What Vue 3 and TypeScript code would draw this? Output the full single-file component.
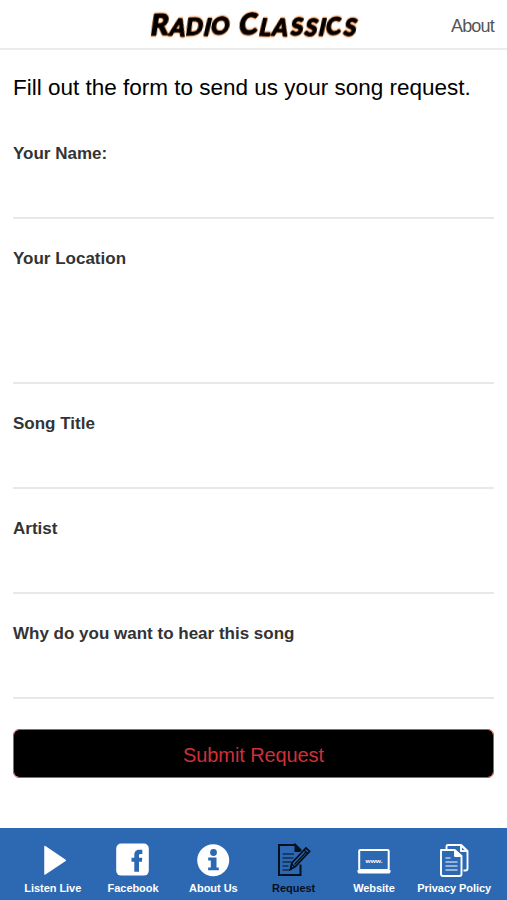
<script setup lang="ts">
import { reactive } from 'vue'

interface Field {
  id: string
  label: string
  multiline?: boolean
}

interface Tab {
  id: string
  label: string
}

const fields: Field[] = [
  { id: 'name', label: 'Your Name:' },
  { id: 'location', label: 'Your Location', multiline: true },
  { id: 'title', label: 'Song Title' },
  { id: 'artist', label: 'Artist' },
  { id: 'reason', label: 'Why do you want to hear this song' },
]

const tabs: Tab[] = [
  { id: 'listen', label: 'Listen Live' },
  { id: 'facebook', label: 'Facebook' },
  { id: 'about', label: 'About Us' },
  { id: 'request', label: 'Request' },
  { id: 'website', label: 'Website' },
  { id: 'privacy', label: 'Privacy Policy' },
]

const activeTab = 'request'
const values = reactive<Record<string, string>>({ name: '', location: '', title: '', artist: '', reason: '' })

// Hand-lettered wordmark: every glyph has its own offset and tilt.
const logoX = [3.5, 22.5, 39, 56.5, 65, 86, 92.5, 112, 125, 144, 157.5, 171.5, 179.5, 196.5]
  .map((x) => (x / 0.95).toFixed(1))
  .join(' ')
const logoTilt = '-2 4 -3 4 -8 0 -6 3 3 -3 4 3 -6 4'
</script>

<template>
  <div class="screen">
    <header class="topbar">
      <svg class="logo" viewBox="0 0 220 40" role="img" aria-label="Radio Classics">
        <text class="logo-text" transform="translate(7 0) skewX(-10) scale(0.95 1)" :x="logoX" y="28.2" :rotate="logoTilt"><tspan class="cap">R</tspan>adio <tspan class="cap">C</tspan>lassics</text>
      </svg>
      <a class="about">About</a>
    </header>

    <form class="form" @submit.prevent>
      <h1 class="intro">Fill out the form to send us your song request.</h1>
      <div v-for="f in fields" :key="f.id" class="field" :class="{ tall: f.multiline }">
        <label :for="f.id">{{ f.label }}</label>
        <textarea v-if="f.multiline" :id="f.id" v-model="values[f.id]"></textarea>
        <input v-else :id="f.id" v-model="values[f.id]" type="text" />
      </div>
      <button class="submit" type="submit">Submit Request</button>
    </form>

    <nav class="tabs">
      <a v-for="t in tabs" :key="t.id" class="tab" :class="{ active: t.id === activeTab }">
        <svg class="icon" viewBox="0 0 40 36">
          <path v-if="t.id === 'listen'" d="M12 4.500 32.300 18.300 12 32Z" fill="currentColor" stroke="currentColor" stroke-width="1.500" stroke-linejoin="round" />
          <template v-else-if="t.id === 'facebook'">
            <rect x="3.200" y="1.600" width="32.600" height="32" rx="5" fill="currentColor" />
            <path d="M21.300 29.700V19.700h-2.800v-4h2.800v-2.700c0-3.600 2-5.300 5.200-5.300h2.800v4.300h-1.700c-1.200 0-1.600.5-1.600 1.600v2.100h3.300l-.4 4H26v10Z" fill="#2d69b3" />
          </template>
          <template v-else-if="t.id === 'about'">
            <circle cx="20.200" cy="18.200" r="16" fill="currentColor" />
            <circle cx="20.500" cy="10.500" r="3.400" fill="#2d69b3" />
            <path d="M15.200 15.600h8.300v9.800h2.300v2.800H15.100v-2.800h2.700v-7h-2.600Z" fill="#2d69b3" />
          </template>
          <g v-else-if="t.id === 'request'" fill="none" stroke="currentColor" stroke-width="2">
            <path d="M21 3H5v30h21.500V22.500M26.500 9V8l-5-5v6h5" />
            <path d="m21 3 6.500 6H21Z" fill="currentColor" stroke="none" />
            <path d="M8.500 12h11.500M8.500 16h11M8.500 20h9M8.500 24h6M8.500 28h8" stroke-width="1" />
            <path d="m16.500 27.200 1.400-6.200L32 6l3.600 3.400-14 15Z" stroke-width="1.800" />
            <path d="m20.500 22.500 12-13M30 8l4 3.700M17.800 22l3 2.800-4.300 2.400Z" stroke-width="1.300" />
          </g>
          <template v-else-if="t.id === 'website'">
            <rect x="5.200" y="8" width="29.500" height="20" rx="1" fill="none" stroke="currentColor" stroke-width="2" />
            <path d="M3.500 28h14l1 1h3l1-1h14v1.700c0 1-1 1.900-2 1.900h-29c-1 0-2-.9-2-1.900Z" fill="currentColor" />
            <text x="20" y="20.500" text-anchor="middle" font-size="6" font-weight="700" textLength="17" lengthAdjust="spacingAndGlyphs" fill="currentColor">www.</text>
          </template>
          <g v-else fill="none" stroke="currentColor" stroke-width="1.900" stroke-linejoin="round">
            <path d="M7 8h13.500l7 6v18a2 2 0 0 1-2 2H9a2 2 0 0 1-2-2Z" />
            <path d="M21 8.500V14h6Z" fill="currentColor" />
            <path d="M12.500 7V4.500Q12.500 3 14 3h13.200l6.300 6v17.500a2 2 0 0 1-2 2h-2M27 3.500V9h6.300Z" />
            <path d="M11.500 16h5M11.500 20h12M11.500 24h12M11.500 28h12" stroke-width="1" />
          </g>
        </svg>
        <span class="tab-label">{{ t.label }}</span>
      </a>
    </nav>
  </div>
</template>

<style>
body {
  background: #fff;
}
</style>

<style scoped>
.screen {
  display: flex;
  flex-direction: column;
  height: 900px;
  overflow: hidden;
  background: #fff;
  color: #000;
  font-family: "Liberation Sans", Arial, sans-serif;
}

.topbar {
  display: grid;
  grid-template-columns: 1fr 220px 1fr;
  align-items: center;
  box-sizing: border-box;
  height: 50px;
  padding: 0 13px;
  border-bottom: 2px solid #ebecec;
}

.logo {
  grid-column: 2;
  width: 220px;
  height: 40px;
  margin-top: 5px;
  overflow: visible;
}

.logo-text {
  font-family: Lato, sans-serif;
  font-size: 23.5px;
  font-weight: 900;
  text-transform: uppercase;
  fill: #000;
  stroke: #000;
  stroke-width: 1.2px;
  stroke-linejoin: round;
  filter: drop-shadow(0 0 0.8px #ff7a18) drop-shadow(0 0 0.6px #ff8a30);
}

.cap {
  font-size: 29px;
}

.about {
  justify-self: end;
  margin-top: 4px;
  font-size: 18px;
  letter-spacing: -0.8px;
  color: #555;
}

.form {
  flex: 1;
  padding: 0 13px;
}

.intro {
  margin: 25px 0 31px;
  font-size: 22.5px;
  line-height: 26px;
  font-weight: 400;
  white-space: nowrap;
}

.field {
  display: flex;
  flex-direction: column;
  box-sizing: border-box;
  height: 87px;
  margin-bottom: 18px;
  padding-top: 11px;
  border-bottom: 2px solid #e8e8e8;
}

.field.tall {
  height: 147px;
}

.field label {
  font-size: 17px;
  line-height: 21px;
  font-weight: 700;
  color: #333;
}

.field input,
.field textarea {
  flex: 1;
  min-height: 0;
  padding: 0;
  border: 0;
  outline: 0;
  resize: none;
  background: transparent;
  font: inherit;
}

.submit {
  display: block;
  width: 100%;
  height: 49px;
  margin-top: 30px;
  padding: 3px 0 0;
  border: 1.5px solid #e0454c;
  border-radius: 6px;
  background: #000;
  background-clip: padding-box;
  color: #cf3038;
  font: 20px "Liberation Sans", Arial, sans-serif;
  letter-spacing: -0.1px;
}

.tabs {
  display: grid;
  grid-template-columns: repeat(6, 80.3px);
  justify-content: center;
  box-sizing: border-box;
  height: 72px;
  padding-top: 14px;
  background: #2d69b3;
}

.tab {
  display: flex;
  flex-direction: column;
  align-items: center;
  color: #fff;
}

.tab.active {
  color: #05101f;
}

.icon {
  width: 40px;
  height: 36px;
}

.tab-label {
  margin-top: 3px;
  font-size: 11px;
  line-height: 14px;
  font-weight: 700;
  letter-spacing: -0.05px;
  white-space: nowrap;
}
</style>
